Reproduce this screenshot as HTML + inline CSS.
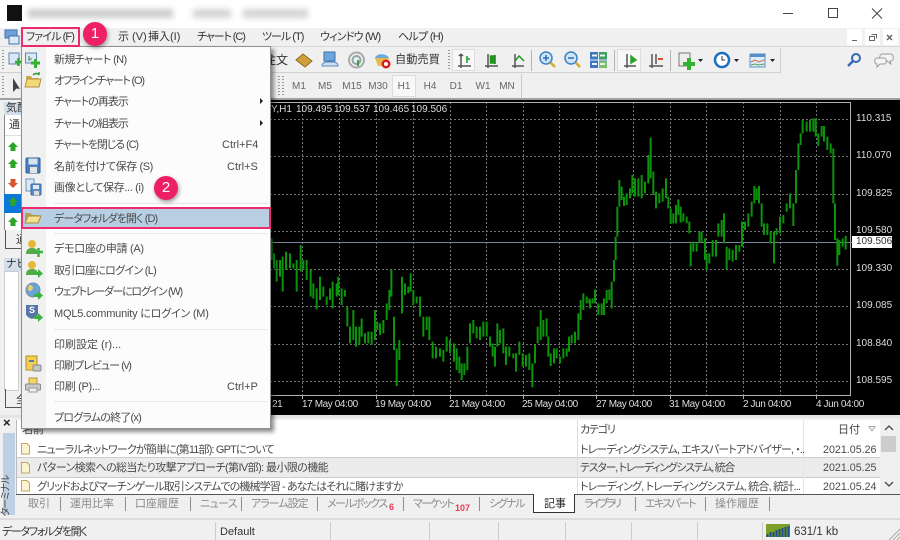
<!DOCTYPE html>
<html lang="ja"><head><meta charset="utf-8"><title>MT4</title>
<style>
html,body{margin:0;padding:0;width:900px;height:540px;overflow:hidden;background:#f0f0f0}
body{position:relative;font:11px/16px "Liberation Sans","Noto Sans CJK JP",sans-serif;font-feature-settings:"palt";color:#333;filter:blur(.3px)}
.a,.t,svg.i{position:absolute}
.t{white-space:nowrap;height:16px}
.c{font-size:10px;color:#ddd;font-family:"Liberation Sans",sans-serif}
.x{letter-spacing:-.4px}
.g{color:#8a8a8a}
.m{color:#4a4a4a}
.tf{font-size:10px;color:#666;transform:translateX(-50%)}
.s{position:absolute;width:1px;background:#8f8f8f}
.b{position:absolute;border-radius:50%;background:#ee1f66;color:#fff;width:24px;height:24px;text-align:center;font:15px/24px "Liberation Sans",sans-serif;box-shadow:1px 2px 4px rgba(0,0,0,.4)}
</style></head><body>

<!-- title bar -->
<div class="a" style="left:0;top:0;width:900px;height:28px;background:#fff"></div>
<div class="a" style="left:7px;top:5px;width:15px;height:16px;background:#111"></div>
<div class="a" style="left:28px;top:9px;width:145px;height:9px;background:#ccc;filter:blur(3px)"></div>
<div class="a" style="left:193px;top:9px;width:38px;height:9px;background:#d4d4d4;filter:blur(3px)"></div>
<div class="a" style="left:243px;top:9px;width:65px;height:9px;background:#d4d4d4;filter:blur(3px)"></div>
<svg class="i" style="left:780px;top:4px" width="110" height="20" fill="none" stroke="#444"><path d="M3 9.500H13"/><rect x="48.500" y="4.500" width="9" height="9"/><path d="M92 4.500l10 10M102 4.500l-10 10"/></svg>

<!-- menu bar -->
<svg class="i" style="left:4px;top:29px" width="16" height="16"><rect x="1" y="1" width="12" height="8" fill="#6d9fd8" stroke="#3f6fae"/><rect x="5" y="7" width="10" height="8" fill="#dbe8f6" stroke="#3f6fae"/></svg>
<div class="t" style="left:26px;top:29px;letter-spacing:-.9px">ファイル (F)</div>
<div class="t" style="left:118px;top:29px">示 (V)</div>
<div class="t" style="left:148px;top:29px">挿入(I)</div>
<div class="t" style="left:197px;top:29px;letter-spacing:-1.100px">チャート (C)</div>
<div class="t" style="left:262px;top:29px;letter-spacing:-1px">ツール (T)</div>
<div class="t" style="left:320px;top:29px;letter-spacing:-.8px">ウィンドウ (W)</div>
<div class="t" style="left:398px;top:29px;letter-spacing:-.7px">ヘルプ (H)</div>
<div class="a" style="left:847px;top:29px;width:15px;height:16px;background:#fff"></div>
<div class="a" style="left:865px;top:29px;width:15px;height:16px;background:#fff"></div>
<div class="a" style="left:883px;top:29px;width:15px;height:16px;background:#fff"></div>
<svg class="i" style="left:847px;top:29px" width="53" height="16" fill="none" stroke="#666"><path d="M5 11.500H10"/><rect x="22.500" y="7.500" width="5" height="4"/><path d="M24.500 5.500h5v4"/><path d="M40 6l5 5M45 6l-5 5" stroke-width="1.500"/></svg>

<!-- toolbars -->
<div class="a" style="left:0;top:46px;width:900px;height:1px;background:#d8d8d8"></div>
<div class="a" style="left:0;top:72px;width:781px;height:1px;background:#d0d0d0"></div>
<div class="a" style="left:780px;top:48px;width:1px;height:25px;background:#cfcfcf"></div>
<div class="a" style="left:2px;top:50px;width:2px;height:21px;background:repeating-linear-gradient(#999 0 1px,transparent 1px 3px)"></div>
<div class="a" style="left:2px;top:76px;width:2px;height:21px;background:repeating-linear-gradient(#999 0 1px,transparent 1px 3px)"></div>
<svg class="i" style="left:8px;top:51px" width="14" height="17"><rect x="1" y="2" width="10" height="11" fill="#dbe8f6" stroke="#5a86b5"/><path d="M7 11h7M10.500 7v8" stroke="#2fae2f" stroke-width="2.500"/></svg>
<svg class="i" style="left:12px;top:77px" width="9" height="18"><path d="M1 1V15L4.500 11.500 8 12z" fill="#444"/></svg>
<div class="t" style="left:264px;top:52px;font-size:12px">注文</div>
<svg class="i" style="left:295px;top:51px" width="18" height="18"><path d="M8 3L17 10 10 16 1 9z" fill="#d2a03a" stroke="#8e6a1f"/></svg>
<svg class="i" style="left:321px;top:51px" width="18" height="18"><rect x="3" y="1" width="11" height="9" fill="#6da5dc" stroke="#3a6ea8"/><path d="M1 15c0-4 4-4 8-4s8 0 8 4z" fill="#cfe0f2" stroke="#5b8bbf"/></svg>
<svg class="i" style="left:348px;top:51px" width="17" height="18" fill="none"><circle cx="8.500" cy="9" r="7.500" stroke="#aaa" stroke-width="2"/><circle cx="8.500" cy="9" r="4" stroke="#8aa" stroke-width="2"/><path d="M10 9v6" stroke="#4b9b4b" stroke-width="2"/></svg>
<svg class="i" style="left:373px;top:51px" width="19" height="18"><path d="M2 7c1-5 12-5 14 0z" fill="#6ba9dc"/><path d="M2 7h14l-2 8H5z" fill="#e9b94c"/><circle cx="13" cy="13" r="4.500" fill="#d81f1f"/><circle cx="13" cy="13" r="2" fill="#fff"/></svg>
<div class="t" style="left:395px;top:52px;font-size:11.200px">自動売買</div>
<div class="a" style="left:448px;top:50px;width:2px;height:21px;background:repeating-linear-gradient(#999 0 1px,transparent 1px 3px)"></div>
<div class="a" style="left:452px;top:49px;width:23px;height:22px;background:#f8f8f8;border:1px solid #ddd;box-sizing:border-box"></div>
<div class="a" style="left:617px;top:49px;width:24px;height:22px;background:#f8f8f8;border:1px solid #ddd;box-sizing:border-box"></div>
<div class="a" style="left:392px;top:75px;width:24px;height:22px;background:#f8f8f8;border:1px solid #ddd;box-sizing:border-box"></div>
<svg class="i" style="left:455px;top:51px" width="76" height="18" fill="none" stroke="#555" stroke-width="1.500"><path d="M6 3V17M3 15H16M6 3L4 5M6 3L8 5"/><path d="M12 5V12M12 8h3" stroke="#1c9a1c" stroke-width="1.500"/><path d="M33 3V17M30 15H43M40 4V13"/><rect x="35.500" y="5" width="3.500" height="7" fill="#1c9a1c" stroke="#1c9a1c"/><path d="M60 3V17M57 15H69"/><path d="M60 10L64 5 69 10" stroke="#1c9a1c"/></svg>
<div class="s" style="left:531px;top:50px;height:21px;background:#b5b5b5"></div>
<svg class="i" style="left:538px;top:50px" width="46" height="20" fill="none"><circle cx="8" cy="8" r="6" fill="#cfe4f6" stroke="#3b82c4" stroke-width="1.500"/><path d="M5 8h6M8 5v6" stroke="#2a6fb5" stroke-width="1.500"/><path d="M12.500 12.500L17 17" stroke="#d7a92b" stroke-width="2.500"/><circle cx="33" cy="8" r="6" fill="#cfe4f6" stroke="#3b82c4" stroke-width="1.500"/><path d="M30 8h6" stroke="#2a6fb5" stroke-width="1.500"/><path d="M37.500 12.500L42 17" stroke="#d7a92b" stroke-width="2.500"/></svg>
<svg class="i" style="left:590px;top:52px" width="17" height="16"><rect width="17" height="16" fill="#3f76c0"/><rect x="9" width="8" height="7" fill="#3aa05a"/><rect y="9" x="9" width="8" height="7" fill="#7cbf6a"/><path d="M2 3.500h5M10 3.500h5M2 12h5M10 12h5" stroke="#e8f0f8" stroke-width="2"/><path d="M8.500 0v16M0 8h17" stroke="#e8f0f8"/></svg>
<div class="s" style="left:614px;top:50px;height:21px;background:#b5b5b5"></div>
<svg class="i" style="left:620px;top:51px" width="46" height="18" fill="none" stroke="#555" stroke-width="1.500"><path d="M7 3V17M4 15H16"/><path d="M11 5L16 9 11 12z" fill="#2aa02a" stroke="#2aa02a"/><path d="M32 3V17M29 15H43M36 3V13"/><path d="M38 8h5" stroke="#d9502e" stroke-width="2"/></svg>
<div class="s" style="left:670px;top:50px;height:21px;background:#b5b5b5"></div>
<svg class="i" style="left:678px;top:50px" width="65" height="21"><rect x="1" y="3" width="11" height="13" fill="#eee" stroke="#777"/><path d="M5 14h12M11 8v12" stroke="#32b232" stroke-width="4"/><path d="M20 9h5l-2.500 3z" fill="#222"/><circle cx="44" cy="10" r="7" fill="#fff" stroke="#1d6fc0" stroke-width="2.500"/><path d="M44 6v4h3" stroke="#333" fill="none"/><path d="M56 9h5l-2.500 3z" fill="#222"/></svg>
<svg class="i" style="left:749px;top:53px" width="30" height="16"><rect x="1" y="1" width="15" height="13" fill="#dcebf8" stroke="#5a8fc4"/><rect x="1" y="1" width="15" height="3" fill="#5a8fc4"/><path d="M2 9l4-2 4 2 5-2" stroke="#d9683e" fill="none"/><path d="M2 12l4-1 4 1 5-1" stroke="#55a055" fill="none"/><path d="M21 6h5l-2.500 3z" fill="#222"/></svg>
<svg class="i" style="left:846px;top:52px" width="16" height="16" fill="none"><circle cx="10" cy="6" r="4" stroke="#3668b5" stroke-width="2"/><path d="M7 9L2 14" stroke="#3668b5" stroke-width="2.500"/></svg>
<svg class="i" style="left:873px;top:52px" width="22" height="17" fill="#f4f4f4" stroke="#9a9a9a"><path d="M9 2h9c3 0 3 7 0 7h-1l1 3-4-3H9c-3 0-3-7 0-7z"/><path d="M4 6h7c3 0 3 6 0 6H7l-3 3v-3c-3 0-3-6 0-6z"/></svg>

<div class="a" style="left:278px;top:76px;width:2px;height:21px;background:repeating-linear-gradient(#999 0 1px,transparent 1px 3px)"></div>
<div class="a" style="left:282px;top:76px;width:2px;height:21px;background:repeating-linear-gradient(#999 0 1px,transparent 1px 3px)"></div>
<div class="s" style="left:521px;top:74px;height:24px;background:#ccc"></div>
<div class="t tf" style="left:299px;top:79px">M1</div>
<div class="t tf" style="left:325px;top:79px">M5</div>
<div class="t tf" style="left:352px;top:79px">M15</div>
<div class="t tf" style="left:378px;top:79px">M30</div>
<div class="t tf" style="left:404px;top:79px">H1</div>
<div class="t tf" style="left:430px;top:79px">H4</div>
<div class="t tf" style="left:456px;top:79px">D1</div>
<div class="t tf" style="left:483px;top:79px">W1</div>
<div class="t tf" style="left:507px;top:79px">MN</div>

<!-- chart -->
<div class="a" style="left:0;top:98px;width:900px;height:2px;background:#a0a0a0"></div>
<div class="a" style="left:0;top:100px;width:900px;height:315px;background:#000"></div>
<svg class="i" style="left:0;top:100px" width="900" height="315">
 <g stroke="#747474" stroke-dasharray="2 2" fill="none">
  <path d="M270 19.500H850M270 56.500H850M270 94.500H850M270 131.500H850M270 169.500H850M270 206.500H850M270 244.500H850M270 281.500H850"/>
  <path d="M302.500 2V295M339.500 2V295M376.500 2V295M413.500 2V295M450.500 2V295M486.500 2V295M523.500 2V295M559.500 2V295M596.500 2V295M633.500 2V295M670.500 2V295M706.500 2V295M743.500 2V295M780.500 2V295M816.500 2V295"/>
 </g>
 <path d="M270 2.500H850.500V295.500H270" fill="none" stroke="#b0b0b0"/>
 <path d="M302.500 295v4M376.500 295v4M450.500 295v4M523.500 295v4M596.500 295v4M670.500 295v4M743.500 295v4M816.500 295v4" stroke="#b0b0b0"/>
 <path d="M270 142.500H852" stroke="#77889a"/>
 <g transform="translate(270,0) scale(.33333)" fill="none" stroke="#0b930b" stroke-width="6">
 <path d="M5 415V480M12 460V505M20 480V545M30 480V530M38 470V575M48 455V510M60 460V505M70 490V505M80 480V575M92 435V515M100 480V510M110 480V540M122 510V590M130 550V595M140 565V628M150 530V600M160 560V590M170 590V615M180 565V600M188 545V625M200 550V590M205 530V585M215 565V615M225 570V590M232 620V680M240 680V730M250 630V720M258 680V740M268 680V735M275 655V710M285 700V730M295 695V730M305 695V735M315 630V720M322 665V690M330 670V705M340 660V700M350 610V660M358 570V630M364 508V590M372 650V750M380 745V858M388 720V780M396 530V640M405 550V585M415 560V580M422 520V575M430 570V615M440 590V610M450 590V650M460 650V710M470 650V690M478 650V720M488 725V775M498 740V775M510 745V770M520 750V785M530 710V755M540 720V760M552 730V785M560 745V810M568 770V820M575 790V840M583 790V825M592 740V810M600 670V730M610 660V700M620 680V715M630 680V720M640 665V710M650 665V710M660 710V740M668 730V770M675 740V800M682 670V740M690 690V730M700 685V760M708 740V795M718 740V770M730 760V775M738 760V815M748 725V765M758 760V800M768 765V800M778 760V810M787 790V862M795 735V790M803 680V730M812 630V720M820 660V710M830 655V710M835 710V770M842 760V798M852 745V790M860 745V775M870 770V790M880 745V775M890 745V770M897 710V755M905 705V730M915 695V730M925 640V720M932 600V660M940 580V630M950 590V610M958 595V610"/>
 </g>
 <g transform="translate(590,0) scale(.33333)" fill="none" stroke="#0b930b" stroke-width="6">
 <path d="M0 600V625M8 595V610M15 568V610M25 610V645M35 610V645M42 595V645M50 570V610M58 568V600M65 545V625M72 480V545M77 410V480M82 320V410M88 240V320M95 260V300M102 290V318M110 280V315M120 265V295M127 225V280M135 235V290M145 235V290M155 225V295M165 245V280M175 165V250M182 113V235M190 215V285M198 275V325M208 280V310M218 265V305M228 235V295M235 290V325M242 325V372M250 340V370M258 315V370M265 298V345M272 320V368M280 340V365M290 350V370M298 365V400M302 430V500M310 425V455M320 430V455M328 395V430M335 395V425M345 415V480M350 460V510M358 460V490M368 420V470M378 420V470M385 370V410M395 360V410M402 340V430M410 440V508M418 445V480M428 450V485M438 435V480M448 435V455M456 365V440M465 365V390M475 340V380M485 305V350M493 258V310M500 265V300M507 258V310M515 310V380M522 370V405M532 370V405M542 395V430M552 395V490M560 385V405M570 350V400M580 345V370M590 310V335M600 280V325M610 310V378M618 210V310M625 130V210M632 100V135M638 60V100M650 65V95M660 60V95M670 55V95M677 55V110M685 100V138M695 78V110M702 78V125M712 110V150M722 130V160M730 145V310M735 310V420M742 415V497M748 420V465M758 415V440M767 408V448"/>
 </g>
</svg>
<div class="t c" style="left:271px;top:102px">Y,H1</div>
<div class="t c" style="left:296px;top:102px">109.495</div>
<div class="t c" style="left:334px;top:102px">109.537</div>
<div class="t c" style="left:373px;top:102px">109.465</div>
<div class="t c" style="left:411px;top:102px">109.506</div>
<div class="t c" style="left:856px;top:111px">110.315</div>
<div class="t c" style="left:856px;top:148px">110.070</div>
<div class="t c" style="left:856px;top:186px">109.825</div>
<div class="t c" style="left:856px;top:223px">109.580</div>
<div class="a" style="left:852px;top:236px;width:40px;height:12px;background:#fff"></div>
<div class="t" style="left:856px;top:234px;font-size:10px;color:#333">109.506</div>
<div class="t c" style="left:856px;top:261px">109.330</div>
<div class="t c" style="left:856px;top:298px">109.085</div>
<div class="t c" style="left:856px;top:336px">108.840</div>
<div class="t c" style="left:856px;top:373px">108.595</div>
<div class="t c x" style="left:272px;top:397px">21</div>
<div class="t c x" style="left:302px;top:397px">17 May 04:00</div>
<div class="t c x" style="left:375px;top:397px">19 May 04:00</div>
<div class="t c x" style="left:449px;top:397px">21 May 04:00</div>
<div class="t c x" style="left:522px;top:397px">25 May 04:00</div>
<div class="t c x" style="left:596px;top:397px">27 May 04:00</div>
<div class="t c x" style="left:669px;top:397px">31 May 04:00</div>
<div class="t c x" style="left:743px;top:397px">2 Jun 04:00</div>
<div class="t c x" style="left:816px;top:397px">4 Jun 04:00</div>

<!-- left panels -->
<div class="a" style="left:0;top:100px;width:21px;height:318px;background:#f0f0f0"></div>
<div class="a" style="left:4px;top:102px;width:17px;height:13px;background:#d3deeb"></div>
<div class="t" style="left:6px;top:100px">気配</div>
<div class="a" style="left:4px;top:115px;width:17px;height:115px;background:#fff;border-left:1px solid #888"></div>
<div class="t" style="left:9px;top:117px">通</div>
<div class="a" style="left:5px;top:135px;width:16px;height:1px;background:#ddd"></div>
<div class="a" style="left:4px;top:194px;width:17px;height:19px;background:#0a78d7"></div>
<svg class="i" style="left:7px;top:140px" width="14" height="92">
 <g fill="#2aa52a"><path d="M6 2L11 7H8.500V11H3.500V7H1z"/><path d="M6 19L11 24H8.500V28H3.500V24H1z"/><path d="M6 57L11 62H8.500V66H3.500V62H1z"/><path d="M6 77L11 82H8.500V86H3.500V82H1z"/></g>
 <path d="M6 48L11 43H8.500V39H3.500V43H1z" fill="#d9542b"/>
</svg>
<div class="a" style="left:5px;top:230px;width:16px;height:18px;border-left:1px solid #555;border-bottom:1px solid #555"></div>
<div class="t" style="left:16px;top:232px">通</div>
<div class="a" style="left:4px;top:258px;width:17px;height:13px;background:#d3deeb"></div>
<div class="t" style="left:6px;top:256px">ナビ</div>
<div class="a" style="left:4px;top:271px;width:13px;height:118px;background:#fff;border:1px solid #ccc"></div>
<div class="a" style="left:5px;top:389px;width:16px;height:18px;border-left:1px solid #555;border-bottom:1px solid #555"></div>
<div class="t" style="left:16px;top:392px">全</div>

<!-- terminal -->
<div class="a" style="left:0;top:415px;width:900px;height:3px;background:#e4e4e4"></div>
<div class="a" style="left:16px;top:420px;width:864px;height:74px;background:#fff"></div>
<div class="a" style="left:16px;top:458px;width:864px;height:19px;background:#ececec"></div>
<div class="a" style="left:16px;top:457px;width:864px;height:1px;background:#ccc"></div>
<div class="a" style="left:16px;top:477px;width:864px;height:1px;background:#ccc"></div>
<div class="a" style="left:16px;top:494px;width:884px;height:1px;background:#555"></div>
<div class="a" style="left:577px;top:420px;width:1px;height:74px;background:#ddd"></div>
<div class="a" style="left:803px;top:420px;width:1px;height:74px;background:#e4e4e4"></div>
<div class="a" style="left:3px;top:433px;width:12px;height:82px;background:#bdd0e4"></div>
<div class="a" style="left:16px;top:420px;width:1px;height:74px;background:#bbb"></div>
<div class="t" style="left:3px;top:415px;font-size:13px;font-weight:bold;color:#222">×</div>
<div class="t" style="left:-23px;top:488px;width:60px;transform:rotate(-90deg);text-align:center;font-size:10px;letter-spacing:-1px;color:#444">ターミナル</div>
<div class="t m" style="left:22px;top:422px">名前</div>
<div class="t m" style="left:580px;top:422px;letter-spacing:-1.200px">カテゴリ</div>
<div class="t m" style="left:838px;top:422px">日付</div>
<svg class="i" style="left:868px;top:425px" width="8" height="8"><path d="M1 1.500H7L4 6z" fill="none" stroke="#aaa"/></svg>
<svg class="i" style="left:20px;top:442px" width="11" height="52"><g fill="#fdf3d0" stroke="#c2a660"><path d="M1.500 1.500H7L9.500 4V12H1.500z"/><path d="M1.500 20.500H7L9.500 23V31H1.500z"/><path d="M1.500 38.500H7L9.500 41V49H1.500z"/></g></svg>
<div class="t m" style="left:37px;top:442px;letter-spacing:-.85px">ニューラルネットワークが簡単に(第11部): GPTについて</div>
<div class="t m" style="left:37px;top:460px;letter-spacing:-.6px">パターン検索への総当たり攻撃アプローチ(第IV部): 最小限の機能</div>
<div class="t m" style="left:37px;top:479px;height:15px;overflow:hidden;letter-spacing:-.9px">グリッドおよびマーチンゲール取引システムでの機械学習 - あなたはそれに賭けますか</div>
<div class="t m" style="left:580px;top:442px;letter-spacing:-.9px">トレーディングシステム, エキスパートアドバイザー, ・..</div>
<div class="t m" style="left:580px;top:460px;letter-spacing:-1.300px">テスター, トレーディングシステム, 統合</div>
<div class="t m" style="left:580px;top:479px;height:15px;overflow:hidden;letter-spacing:-.8px">トレーディング, トレーディングシステム, 統合, 統計...</div>
<div class="t m" style="left:823px;top:442px;font-size:10.700px">2021.05.26</div>
<div class="t m" style="left:823px;top:460px;font-size:10.700px">2021.05.25</div>
<div class="t m" style="left:823px;top:479px;height:15px;overflow:hidden;font-size:10.700px">2021.05.24</div>
<div class="a" style="left:881px;top:436px;width:15px;height:16px;background:#cdcdcd"></div>
<svg class="i" style="left:881px;top:420px" width="16" height="74" fill="none" stroke="#555" stroke-width="1.500"><path d="M4 10l4-4 4 4M4 62l4 4 4-4"/></svg>

<div class="t g" style="left:28px;top:496px">取引</div>
<div class="t g" style="left:70px;top:496px">運用比率</div>
<div class="t g" style="left:135px;top:496px">口座履歴</div>
<div class="t g" style="left:200px;top:496px;letter-spacing:-.7px">ニュース</div>
<div class="t g" style="left:251px;top:496px;letter-spacing:-1px">アラーム設定</div>
<div class="t g" style="left:327px;top:496px;letter-spacing:-1.400px">メールボックス</div>
<div class="t" style="left:389px;top:499px;font-size:9px;font-weight:bold;color:#e8384f">6</div>
<div class="t g" style="left:413px;top:496px;letter-spacing:-1.600px">マーケット</div>
<div class="t" style="left:455px;top:500px;font-size:9px;font-weight:bold;color:#e8384f">107</div>
<div class="t g" style="left:489px;top:496px;letter-spacing:-1.500px">シグナル</div>
<div class="a" style="left:533px;top:494px;width:42px;height:19px;background:#fff;border:1px solid #333;border-top:0;box-sizing:border-box"></div>
<div class="t" style="left:544px;top:496px;color:#222">記事</div>
<div class="t g" style="left:584px;top:496px;letter-spacing:-2.400px">ライブラリ</div>
<div class="t g" style="left:645px;top:496px;letter-spacing:-1.700px">エキスパート</div>
<div class="t g" style="left:715px;top:496px">操作履歴</div>
<div class="s" style="left:60px;top:497px;height:14px"></div>
<div class="s" style="left:125px;top:497px;height:14px"></div>
<div class="s" style="left:190px;top:497px;height:14px"></div>
<div class="s" style="left:241px;top:497px;height:14px"></div>
<div class="s" style="left:317px;top:497px;height:14px"></div>
<div class="s" style="left:403px;top:497px;height:14px"></div>
<div class="s" style="left:479px;top:497px;height:14px"></div>
<div class="s" style="left:635px;top:497px;height:14px"></div>
<div class="s" style="left:705px;top:497px;height:14px"></div>
<div class="s" style="left:769px;top:497px;height:14px"></div>

<!-- status bar -->
<div class="a" style="left:0;top:518px;width:900px;height:2px;background:#dcdcdc"></div>
<div class="t" style="left:2px;top:524px;letter-spacing:-1.300px">データフォルダを開く</div>
<div class="t" style="left:220px;top:524px">Default</div>
<div class="s" style="left:215px;top:522px;height:18px;background:#ccc"></div>
<div class="s" style="left:330px;top:522px;height:18px;background:#ccc"></div>
<div class="s" style="left:429px;top:522px;height:18px;background:#ccc"></div>
<div class="s" style="left:498px;top:522px;height:18px;background:#ccc"></div>
<div class="s" style="left:565px;top:522px;height:18px;background:#ccc"></div>
<div class="s" style="left:631px;top:522px;height:18px;background:#ccc"></div>
<div class="s" style="left:697px;top:522px;height:18px;background:#ccc"></div>
<div class="s" style="left:762px;top:522px;height:18px;background:#ccc"></div>
<svg class="i" style="left:766px;top:524px" width="24" height="13"><rect width="24" height="13" fill="#7da02a"/><path d="M1.500 13V10M4.500 13V8M7.500 13V8M10.500 13V6M13.500 13V5M16.500 13V4M19.500 13V3M22.500 13V2" stroke="#1d4f86" stroke-width="2"/></svg>
<div class="t" style="left:794px;top:524px;font-size:11.500px">631/1 kb</div>
<svg class="i" style="left:888px;top:528px" width="12" height="12" stroke="#aaa"><path d="M12 1L1 12M12 5L5 12M12 9L9 12"/></svg>

<!-- dropdown menu -->
<div class="a" style="left:21px;top:46px;width:250px;height:383px;background:#fcfcfc;border:1px solid #8f8f8f;box-sizing:border-box;box-shadow:3px 3px 4px rgba(0,0,0,.45)"></div>
<div class="a" style="left:22px;top:47px;width:24px;height:381px;background:#f0f0f0"></div>
<div class="a" style="left:54px;top:203px;width:214px;height:1px;background:#e8e8e8"></div>
<div class="a" style="left:54px;top:233px;width:214px;height:1px;background:#e8e8e8"></div>
<div class="a" style="left:54px;top:329px;width:214px;height:1px;background:#e8e8e8"></div>
<div class="a" style="left:54px;top:401px;width:214px;height:1px;background:#e8e8e8"></div>
<div class="a" style="left:21px;top:207px;width:250px;height:22px;background:#b8cfe3;border:2px solid #ee2a6e;box-sizing:border-box"></div>
<div class="a" style="left:21px;top:27px;width:59px;height:20px;border:2px solid #ee2a6e;box-sizing:border-box"></div>

<div class="t m" style="left:54px;top:52px;letter-spacing:-.6px">新規チャート (N)</div>
<div class="t m" style="left:54px;top:73px;letter-spacing:-1.200px">オフラインチャート (O)</div>
<div class="t m" style="left:54px;top:94px;letter-spacing:-1px">チャートの再表示</div>
<div class="t m" style="left:54px;top:116px;letter-spacing:-1px">チャートの組表示</div>
<div class="t m" style="left:54px;top:137px;letter-spacing:-1.100px">チャートを閉じる (C)</div>
<div class="t m" style="left:222px;top:137px">Ctrl+F4</div>
<div class="t m" style="left:54px;top:159px;letter-spacing:-.4px">名前を付けて保存 (S)</div>
<div class="t m" style="left:227px;top:159px">Ctrl+S</div>
<div class="t m" style="left:54px;top:180px;letter-spacing:-.35px">画像として保存... (i)</div>
<div class="t m" style="left:54px;top:211px;letter-spacing:-.9px">データフォルダを開く (D)</div>
<div class="t m" style="left:54px;top:241px;letter-spacing:-.3px">デモ口座の申請 (A)</div>
<div class="t m" style="left:54px;top:263px;letter-spacing:-.7px">取引口座にログイン (L)</div>
<div class="t m" style="left:54px;top:284px;letter-spacing:-1.300px">ウェブトレーダーにログイン (W)</div>
<div class="t m" style="left:54px;top:306px;letter-spacing:-.2px">MQL5.community にログイン (M)</div>
<div class="t m" style="left:54px;top:337px">印刷設定 (r)...</div>
<div class="t m" style="left:54px;top:358px;letter-spacing:-1px">印刷プレビュー (v)</div>
<div class="t m" style="left:54px;top:379px;letter-spacing:-.3px">印刷 (P)...</div>
<div class="t m" style="left:227px;top:379px">Ctrl+P</div>
<div class="t m" style="left:54px;top:410px;letter-spacing:-.8px">プログラムの終了(x)</div>
<svg class="i" style="left:259px;top:97px" width="5" height="30" fill="#222"><path d="M1 1L4 4 1 7zM1 23L4 26 1 29z"/></svg>

<!-- menu icons -->
<svg class="i" style="left:24px;top:51px" width="18" height="18"><rect x="1.500" y="2" width="11" height="10" fill="#dbe8f6" stroke="#5a86b5"/><path d="M5 5v5M5 8h3" stroke="#4a7a4a"/><path d="M7 12h9M11.500 8v9" stroke="#35b035" stroke-width="3"/></svg>
<svg class="i" style="left:24px;top:71px" width="18" height="18"><path d="M2 8V5h5l1 2h6v3z" fill="#c9a94f"/><path d="M1 16L3 8H17L15 16z" fill="#f2d877" stroke="#b3923c"/><path d="M9 4c2-2 5-2 6 0M15 4V1" stroke="#35a035" fill="none" stroke-width="1.500"/></svg>
<svg class="i" style="left:25px;top:157px" width="16" height="17"><rect x="1" y="1" width="14" height="15" rx="1" fill="#4a80c0" stroke="#2f5f98"/><rect x="3.500" y="1.500" width="9" height="6" fill="#d8e4f0"/><rect x="5" y="10" width="7" height="6" fill="#e4e4e4"/></svg>
<svg class="i" style="left:25px;top:178px" width="17" height="18"><rect x="1" y="1" width="8" height="12" fill="#dce8f4" stroke="#6d93b8"/><rect x="6" y="6" width="10" height="11" rx="1" fill="#5b8bc4" stroke="#38689f"/><rect x="8" y="7" width="6" height="4" fill="#e0e8f0"/><rect x="9" y="13" width="5" height="4" fill="#ddd"/></svg>
<svg class="i" style="left:24px;top:209px" width="18" height="17"><path d="M1 4V14H15V6H8L6.500 4z" fill="#b8a05a"/><path d="M1 14L4 7H17L14 14z" fill="#f3e08d" stroke="#a68c46"/></svg>
<svg class="i" style="left:24px;top:239px" width="20" height="18"><circle cx="8" cy="5" r="4" fill="#e6b93a"/><path d="M2 15c0-5 3-6 6-6s6 1 6 6z" fill="#56a84b"/><path d="M10 13h9M14.500 9v9" stroke="#3fb03f" stroke-width="2.500"/></svg>
<svg class="i" style="left:24px;top:260px" width="20" height="19"><circle cx="8" cy="5" r="4" fill="#e6b93a"/><path d="M2 15c0-5 3-6 6-6s6 1 6 6z" fill="#56a84b"/><path d="M14 9l5 4.500-5 4.500v-3h-4v-3h4z" fill="#3fb03f"/></svg>
<svg class="i" style="left:24px;top:282px" width="20" height="19"><circle cx="9" cy="8" r="7" fill="#6aa3dc" stroke="#7d8ea0"/><path d="M5 3c4 0 5 3 3 5S4 9 4 6z" fill="#e6d265"/><path d="M14 9l5 4.500-5 4.500v-3h-4v-3h4z" fill="#3fb03f"/></svg>
<svg class="i" style="left:24px;top:304px" width="20" height="19"><path d="M2 1H14V10C14 13 8 15 8 15S2 13 2 10z" fill="#5676a8"/><path d="M14 9l5 4.500-5 4.500v-3h-4v-3h4z" fill="#3fb03f"/></svg>
<div class="t" style="left:29px;top:304px;font-size:9px;color:#fff;font-weight:bold;height:12px;line-height:12px">S</div>
<svg class="i" style="left:24px;top:355px" width="18" height="18"><rect x="2" y="1" width="11" height="14" fill="#f3cf55" stroke="#b28f2b"/><path d="M5 6h5" stroke="#4c7fb5" stroke-width="2"/><rect x="9" y="10" width="8" height="6" rx="1" fill="#c4c4c4" stroke="#888"/></svg>
<svg class="i" style="left:24px;top:377px" width="18" height="17"><rect x="5" y="1" width="8" height="7" fill="#f3d467" stroke="#b59437"/><rect x="1.500" y="7" width="15" height="6" rx="1" fill="#c8c8c8" stroke="#8a8a8a"/><rect x="5" y="11" width="8" height="4" fill="#eee" stroke="#999"/></svg>

<!-- badges -->
<div class="b" style="left:83px;top:22px">1</div>
<div class="b" style="left:154px;top:176px">2</div>
</body></html>
